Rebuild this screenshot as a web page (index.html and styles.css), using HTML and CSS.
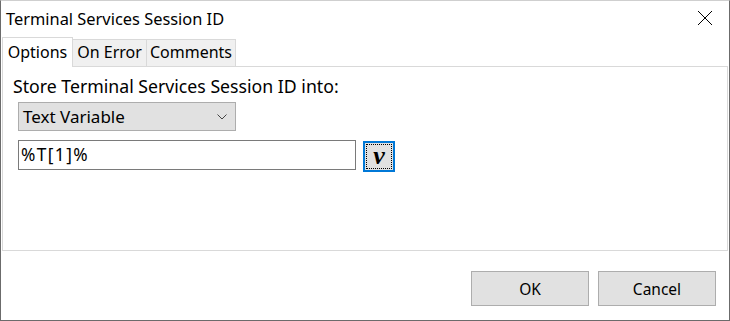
FILE: index.html
```html
<!DOCTYPE html>
<html lang="en">

<head>
    <meta charset="UTF-8">
    <title>Terminal Services Session ID</title>
    <link rel="stylesheet" href="styles.css">
</head>

<body>
    <div class="window">
        <div class="titlebar">
            <span class="title">Terminal Services Session ID</span>
            <svg class="close" width="16" height="16" viewBox="0 0 16 16">
                <path d="M1 1 L15 15 M15 1 L1 15" stroke="#000" stroke-width="1" fill="none" />
            </svg>
        </div>
        <div class="tabs">
            <div class="tab active">Options</div>
            <div class="tab">On Error</div>
            <div class="tab">Comments</div>
        </div>
        <div class="panel">
            <div class="label">Store Terminal Services Session ID into:</div>
            <div class="select">
                <span>Text Variable</span>
                <svg width="10" height="6" viewBox="0 0 10 6">
                    <path d="M0.5 0.5 L5 5 L9.5 0.5" stroke="#444" stroke-width="1" fill="none" />
                </svg>
            </div>
            <div class="row">
                <div class="input">%T[1]%</div>
                <div class="var-btn"><span>v</span></div>
            </div>
        </div>
        <div class="footer">
            <button class="btn">OK</button>
            <button class="btn">Cancel</button>
        </div>
    </div>
</body>

</html>
```

FILE: styles.css
```css
* {
    margin: 0;
    padding: 0;
    box-sizing: border-box;
}

body {
    font-family: 'Noto Sans', sans-serif;
    font-size: 16px;
    color: #000;
    background: #fff;
}

.window {
    width: 730px;
    height: 321px;
    display: flex;
    flex-direction: column;
    border: 1px solid #6b6b6b;
    border-top-color: #cfcfcf;
    background: #fff;
}

.titlebar {
    height: 36px;
    display: flex;
    align-items: center;
    justify-content: space-between;
    padding: 0 16px 2px 5px;
}

.title {
    font-size: 16.4px;
}

/* tabs */
.tabs {
    display: flex;
    align-items: flex-end;
    height: 29px;
    margin: 0 1px;
}

.tab {
    height: 27px;
    line-height: 25px;
    text-align: center;
    background: #f0f0f0;
    border: 1px solid #d9d9d9;
    border-bottom: none;
    margin-left: -1px;
}

.tab:nth-child(2) {
    width: 75px;
}

.tab:nth-child(3) {
    width: 90px;
}

.tab.active {
    width: 71px;
    height: 30px;
    background: #fff;
    margin-left: 0;
    line-height: 28px;
    position: relative;
    z-index: 1;
    margin-bottom: -1px;
}

.panel {
    height: 185px;
    margin: 0 1px;
    border: 1px solid #d9d9d9;
    padding: 9px 10px 0 10px;
}

.label {
    font-size: 17.7px;
    line-height: 20px;
}

.select {
    width: 218px;
    height: 29px;
    margin: 6px 0 0 5px;
    background: #e1e1e1;
    border: 1px solid #adadad;
    display: flex;
    align-items: center;
    justify-content: space-between;
    padding: 0 8px 0 4px;
    font-size: 17px;
}

.row {
    display: flex;
    align-items: flex-start;
    margin: 9px 0 0 5px;
    gap: 7px;
}

.input {
    width: 338px;
    height: 30px;
    border: 1px solid #7a7a7a;
    padding: 0 2px;
    line-height: 28px;
    font-size: 17.3px;
    letter-spacing: 1.4px;
}

.var-btn {
    width: 32px;
    height: 31px;
    margin-top: 1px;
    border: 2px solid #0078d7;
    background: #e1e1e1;
    padding: 1px;
}

.var-btn span {
    display: block;
    height: 100%;
    border: 1px dotted #000;
    text-align: center;
    font-family: 'Liberation Serif', serif;
    font-style: italic;
    font-weight: bold;
    font-size: 26px;
    line-height: 22px;
}

.footer {
    flex: 1;
    display: flex;
    justify-content: flex-end;
    align-items: flex-start;
    gap: 9px;
    padding: 20px 13px 0 0;
}

.btn {
    width: 118px;
    height: 35px;
    background: #e1e1e1;
    border: 1px solid #adadad;
    font-family: 'Noto Sans', sans-serif;
    font-size: 15.5px;
    color: #000;
}
```
